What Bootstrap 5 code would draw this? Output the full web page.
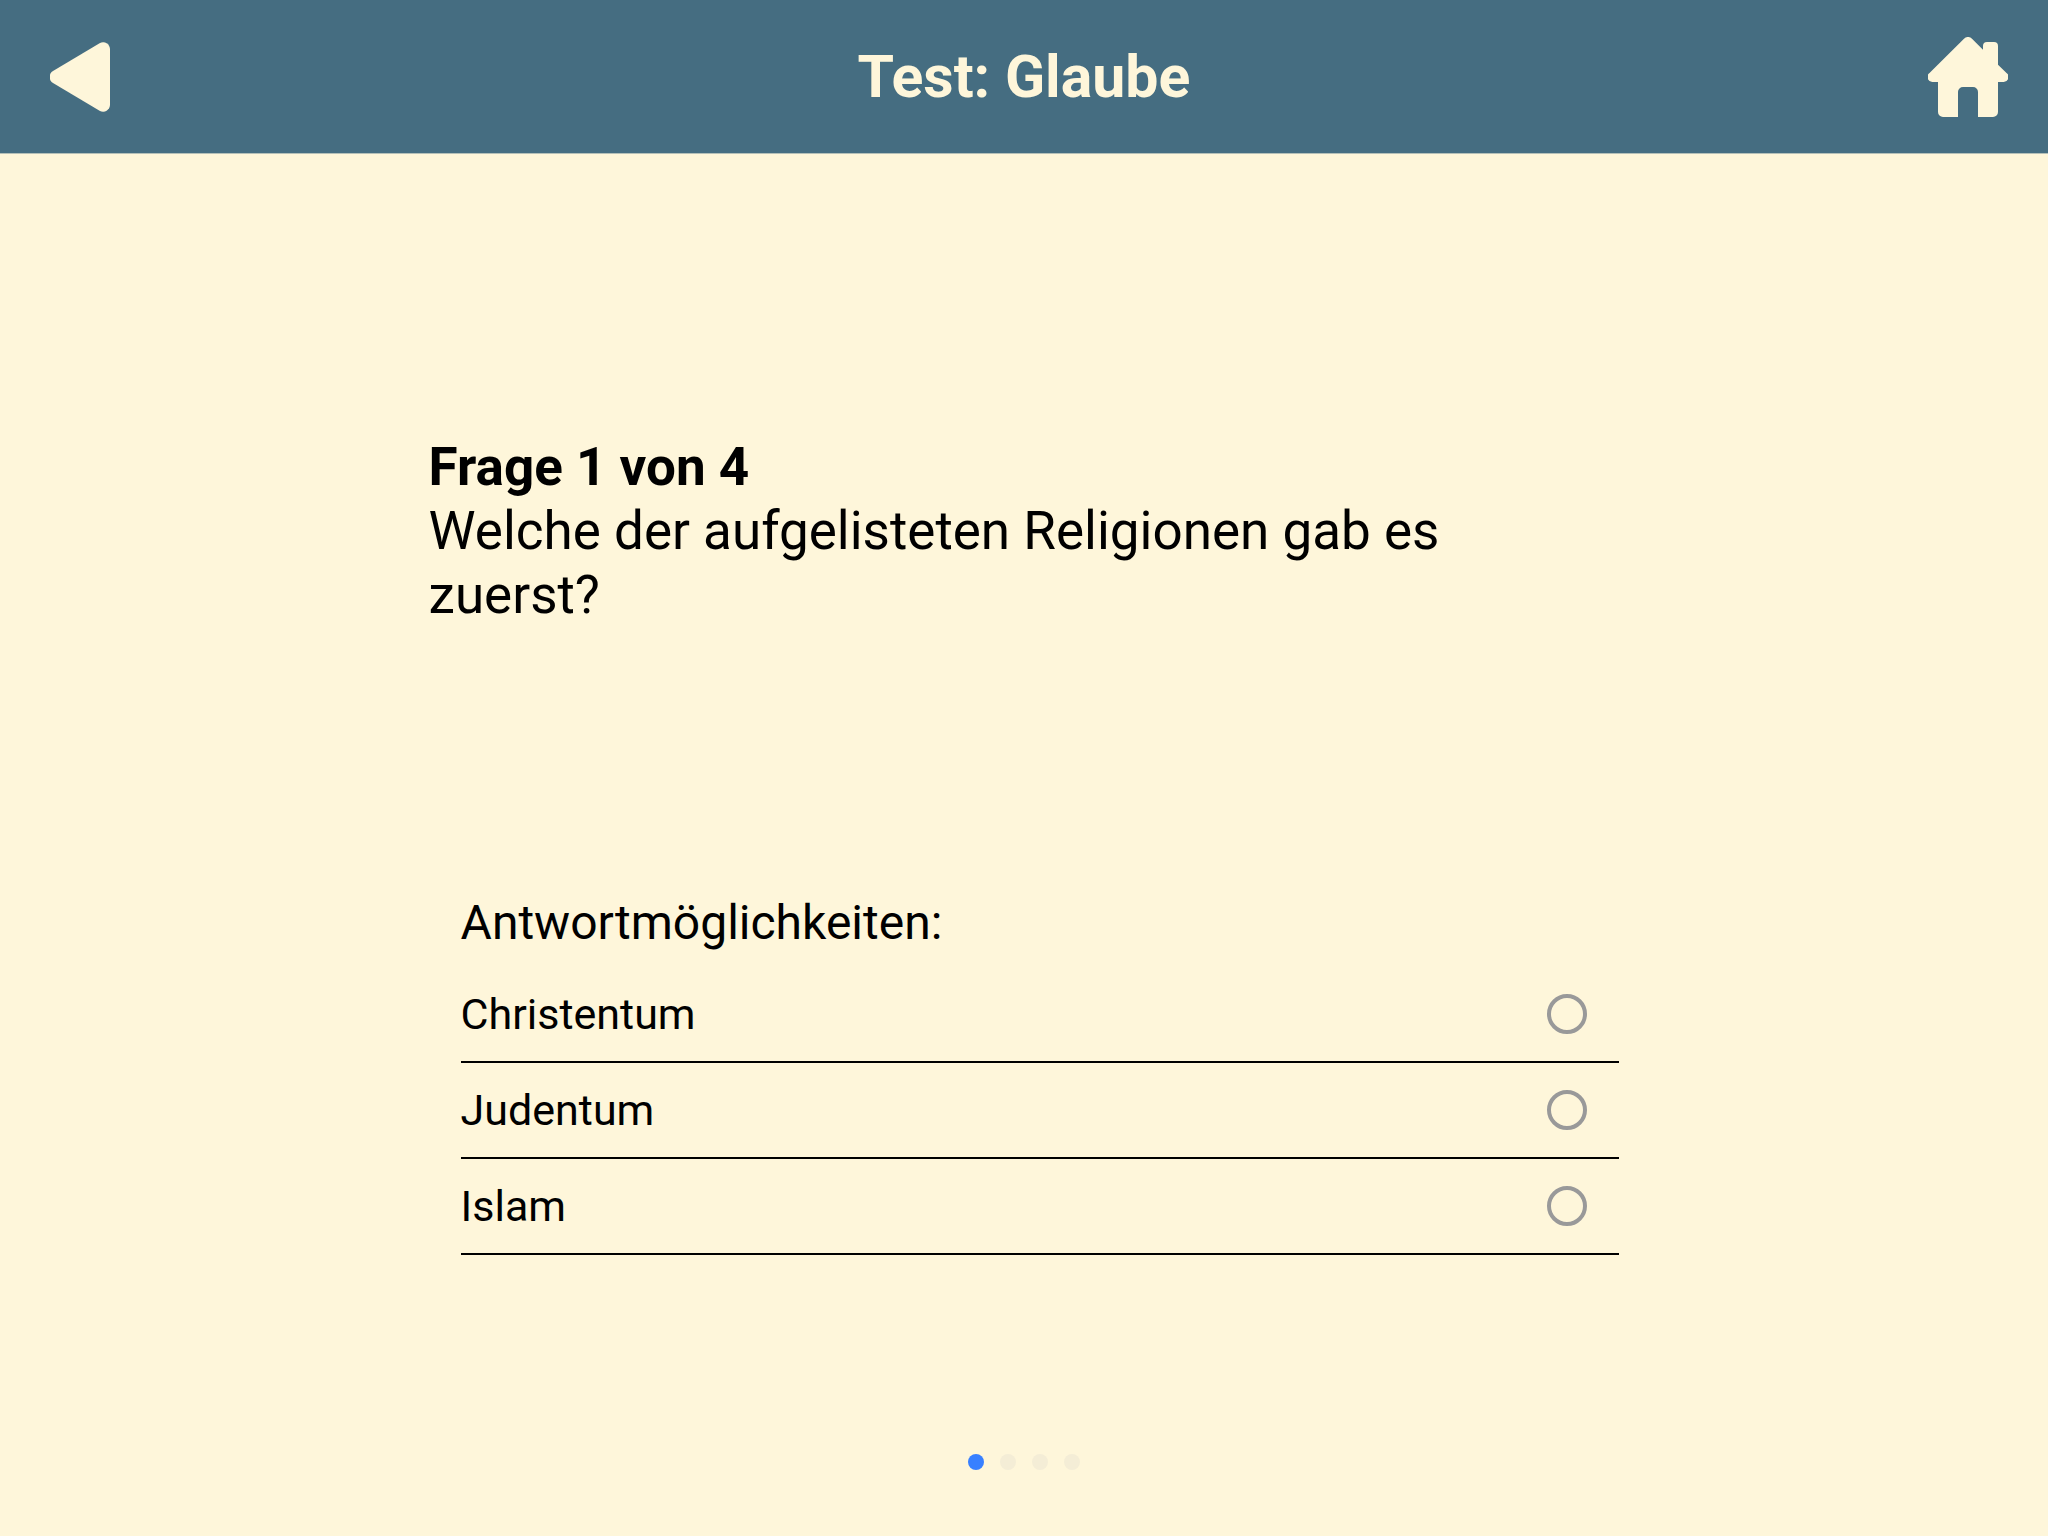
<!DOCTYPE html>
<html lang="de">
<head>
<meta charset="utf-8">
<meta name="viewport" content="width=device-width, initial-scale=1">
<title>Test: Glaube</title>
<link rel="stylesheet" href="https://cdn.jsdelivr.net/npm/bootstrap@5.3.0/dist/css/bootstrap.min.css">
<style>
  body { background: #fef6da; color: #000; font-family: Roboto, "Noto Sans", sans-serif; }
  .app-bar { background: #456d81; color: #fef6da; height: 154px; border-bottom: 1px solid #b5c0b8; padding: 0 40px; }
  .app-bar a { color: inherit; width: 80px; }
  .app-title { font-size: 59px; line-height: 72px; }
  .quiz-slide { width: 60%; padding: 0 19px; }
  .question-block { font-size: 53px; line-height: 64px; margin-bottom: 252px; }
  .question-block h2 { font-size: inherit; line-height: inherit; }
  .answer-block { padding-left: 32px; }
  .answer-block legend { font-size: 48px; line-height: 56px; padding: 16px 0; }
  .answer-row { height: 96px; border-bottom: 2px solid #000; padding-right: 32px; font-size: 43px; }
  .answer-row .form-check-input { width: 40px; height: 40px; border: 4px solid #999; background-color: transparent; }
  .pager { bottom: 66px; gap: 16px; }
  .pager button { width: 16px; height: 16px; background: #f4edd6; }
  .pager button.active { background: #3880ff; }
</style>
</head>
<body class="d-flex flex-column min-vh-100 position-relative">
<header class="app-bar d-flex align-items-center justify-content-between">
  <a href="#zurueck" class="d-flex justify-content-center" aria-label="Zurück">
    <svg width="60" height="70" viewBox="0 0 60 70" fill="currentColor" aria-hidden="true"><path d="M50 1A7 7 0 0 1 60 7V63A7 7 0 0 1 50 69L3 41A7 7 0 0 1 3 29Z"/></svg>
  </a>
  <h1 class="app-title fw-bold m-0">Test: Glaube</h1>
  <a href="#start" class="d-flex" aria-label="Startseite">
    <svg width="80" height="80" viewBox="0 0 80 80" fill="currentColor" aria-hidden="true"><path d="M36 1.700A5.500 5.500 0 0 1 44 1.700L55 12.700V9a4 4 0 0 1 4-4H66a4 4 0 0 1 4 4V27.700L78.500 36A5 5 0 0 1 75 45H70V75a5 5 0 0 1-5 5H50V55a5 5 0 0 0-5-5H35a5 5 0 0 0-5 5V80H15a5 5 0 0 1-5-5V45H5A5 5 0 0 1 1.500 36Z"/></svg>
  </a>
</header>
<main class="flex-grow-1 d-flex flex-column justify-content-center align-items-center">
  <form class="quiz-slide">
    <div class="question-block">
      <h2 class="fw-bold m-0">Frage 1 von 4</h2>
      <p class="m-0">Welche der aufgelisteten Religionen gab es zuerst?</p>
    </div>
    <fieldset class="answer-block">
      <legend class="m-0">Antwortmöglichkeiten:</legend>
      <div class="answer-row d-flex align-items-center justify-content-between">
        <label class="flex-grow-1" for="a1">Christentum</label>
        <input class="form-check-input m-0" type="radio" name="antwort" id="a1">
      </div>
      <div class="answer-row d-flex align-items-center justify-content-between">
        <label class="flex-grow-1" for="a2">Judentum</label>
        <input class="form-check-input m-0" type="radio" name="antwort" id="a2">
      </div>
      <div class="answer-row d-flex align-items-center justify-content-between">
        <label class="flex-grow-1" for="a3">Islam</label>
        <input class="form-check-input m-0" type="radio" name="antwort" id="a3">
      </div>
    </fieldset>
  </form>
</main>
<nav class="pager position-absolute start-0 end-0 d-flex justify-content-center" aria-label="Fragen">
  <button type="button" class="active border-0 p-0 rounded-circle" aria-label="Frage 1"></button>
  <button type="button" class="border-0 p-0 rounded-circle" aria-label="Frage 2"></button>
  <button type="button" class="border-0 p-0 rounded-circle" aria-label="Frage 3"></button>
  <button type="button" class="border-0 p-0 rounded-circle" aria-label="Frage 4"></button>
</nav>
<script src="https://cdn.jsdelivr.net/npm/bootstrap@5.3.0/dist/js/bootstrap.bundle.min.js"></script>
</body>
</html>
